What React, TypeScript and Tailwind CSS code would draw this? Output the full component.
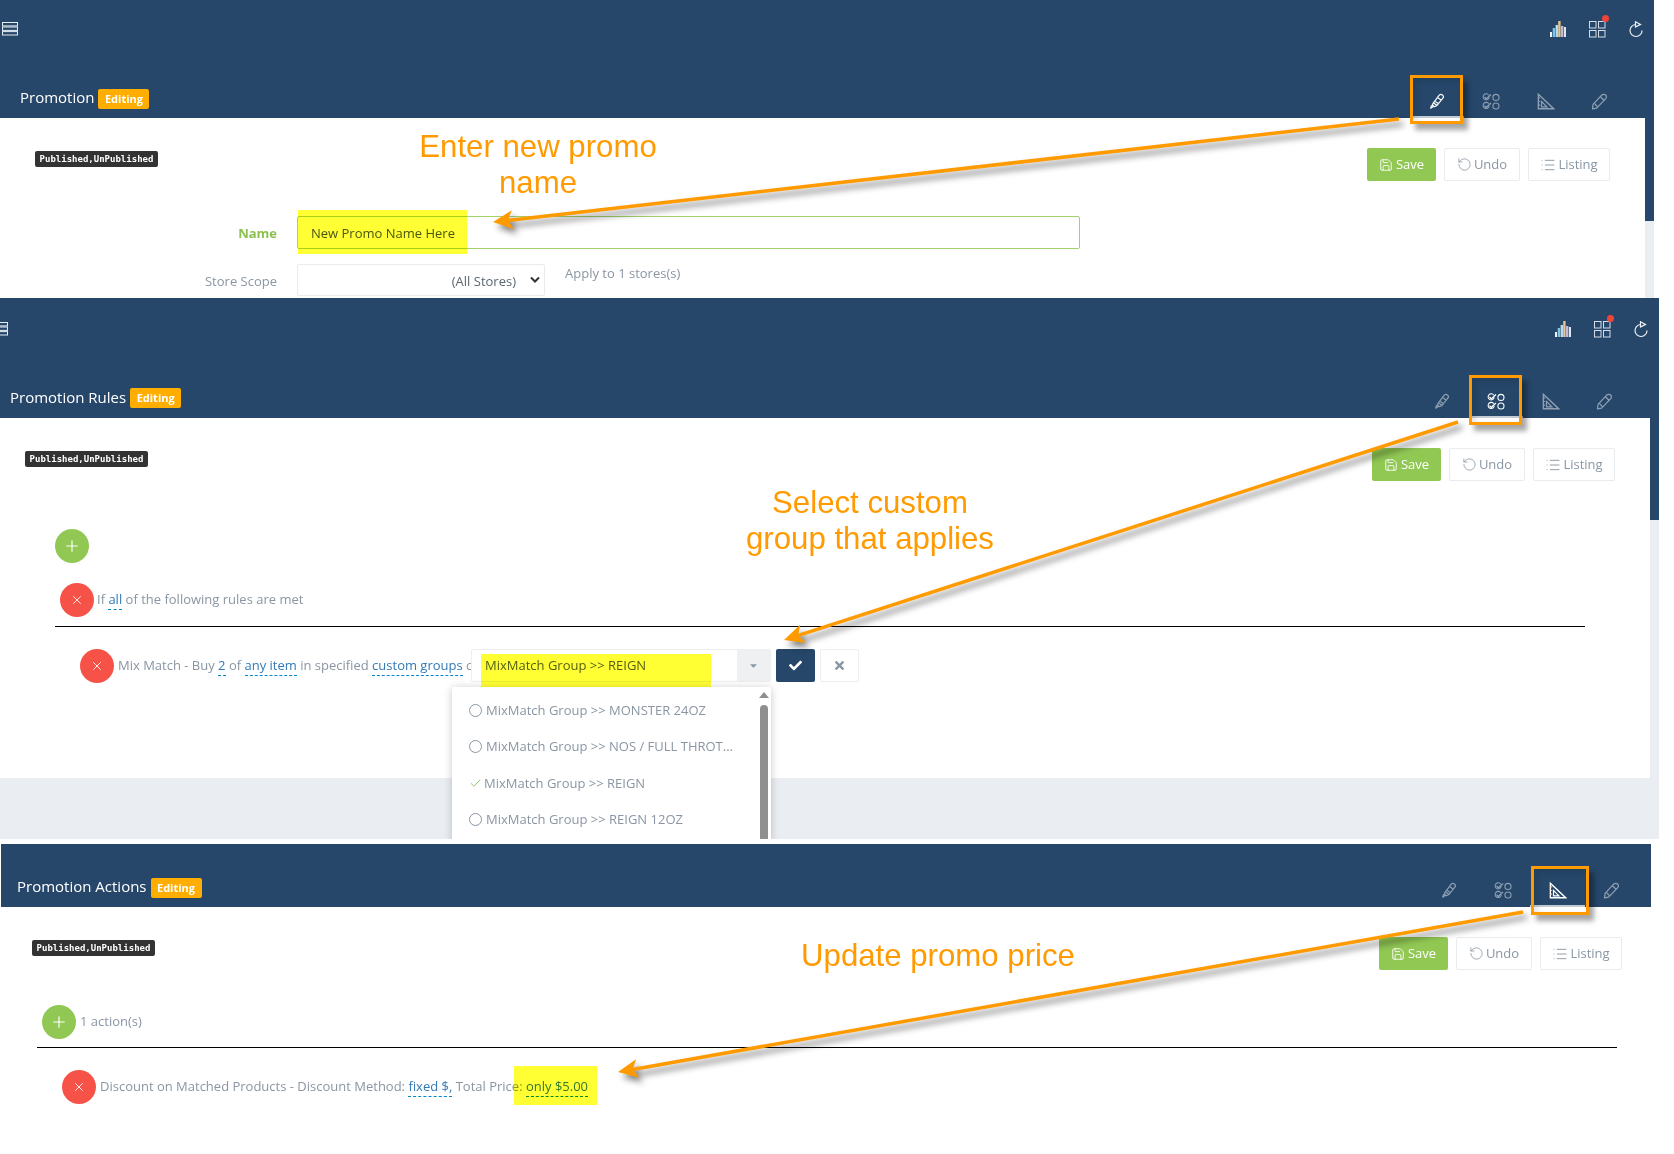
import React from "react";
import { FaCheck, FaTimes, FaCaretDown } from "react-icons/fa";
import { Save, RotateCcw, List, Plus, X, Check } from "lucide-react";

const TabEdit = ({ on }: { on: boolean }) => (
  <svg width="18" height="18" viewBox="0 0 20 20" fill="none" stroke={on ? "#ffffff" : "#8fa0b3"} strokeWidth="1.3" strokeLinejoin="round">
    <path d="M6 12 L12.5 3.5 Q14 2 16 3.2 Q18 5 16.7 6.6 L10 15 Z" />
    <path d="M6 12 L4.6 14.8 L5.8 16 L3 18 L3.8 15 M10 15 L7 16.4 L5.2 14.6" />
    <path d="M8 10.5 L12 13 M11 6.5 L14.5 9" />
  </svg>
);
const TabRules = ({ on }: { on: boolean }) => (
  <svg width="18" height="17" viewBox="0 0 20 18" fill="none" stroke={on ? "#ffffff" : "#8fa0b3"} strokeWidth="1.2">
    <path d="M7.5 2 A3.4 3.4 0 1 0 8 4.5" />
    <circle cx="15.5" cy="4.5" r="3.4" />
    <path d="M7.5 11.5 A3.4 3.4 0 1 0 8 14" />
    <circle cx="15.5" cy="14" r="3.4" />
    <path d="M2.8 4 L4.7 6.2 L10 1.2 M2.8 13.5 L4.7 15.7 L10 10.7" strokeWidth="1.4" />
  </svg>
);
const TabAction = ({ on }: { on: boolean }) => (
  <svg width="18" height="17" viewBox="0 0 20 18" fill="none" stroke={on ? "#ffffff" : "#8fa0b3"} strokeWidth="1.3">
    <path d="M1.5 1 L18.5 17 L1.5 17 Z" strokeWidth="1.5" />
    <path d="M5 9 L11 15 L5 15 Z" />
    <path d="M1.5 5 H3.5 M1.5 9 H3.5 M1.5 13 H3.5" stroke={on ? "#f4c28a" : "#8fa0b3"} />
  </svg>
);
const TabPencil = () => (
  <svg width="17" height="17" viewBox="0 0 18 18" fill="none" stroke="#8fa0b3" strokeWidth="1.3" strokeLinejoin="round">
    <path d="M2.2 12 L11.5 2 Q13.4 0.6 15.6 2.2 Q17 4.2 15.6 6 L6 16 L1.6 16.8 Z" />
    <path d="M10 4 L14 8 M3.5 11 L7 14.5" />
  </svg>
);

const TopIcons = ({ className }: { className: string }) => (
  <div className={`flex items-center ${className}`}>
    <svg width="16" height="16" viewBox="0 0 16 16">
      <rect x="0" y="11" width="2" height="5" fill="#eef4f8" />
      <rect x="2.7" y="7" width="2.4" height="9" fill="#7cc4e8" />
      <rect x="5.6" y="4" width="2.4" height="12" fill="#b6dcec" />
      <rect x="8.2" y="0" width="2.4" height="16" fill="#e8c48a" />
      <rect x="11" y="5" width="2.4" height="11" fill="#c8b8d8" />
      <rect x="14" y="6" width="2" height="10" fill="#dfe7ee" />
    </svg>
    <div className="relative">
      <svg width="17" height="17" viewBox="0 0 17 17" fill="none" stroke="#d5dee8" strokeWidth="1">
        <rect x="0.5" y="0.5" width="6.5" height="6.5" />
        <rect x="9.5" y="0.5" width="6.5" height="6.5" />
        <rect x="0.5" y="9.5" width="6.5" height="6.5" />
        <rect x="9.5" y="9.5" width="6.5" height="6.5" />
      </svg>
      <span className="absolute -top-[6px] -right-[3px] w-[7px] h-[7px] rounded-full bg-[#f04438]" />
    </div>
    <svg width="15" height="17" viewBox="0 0 15 17" fill="none" stroke="#eef3f7" strokeWidth="1.2">
      <path d="M6.5 3.5 A6 6 0 1 0 13 9.5" />
      <path d="M6.5 0.8 L6.5 6 L11.5 3.4 Z" />
    </svg>
  </div>
);

const MenuIcon = ({ className }: { className: string }) => (
  <svg width="16" height="14" viewBox="0 0 16 14" fill="none" stroke="#e6edf3" strokeWidth="1" className={className}>
    <rect x="0.5" y="0.5" width="15" height="3.4" />
    <rect x="0.5" y="5" width="15" height="3.4" />
    <rect x="0.5" y="9.6" width="15" height="3.4" />
  </svg>
);

const Header = ({ title, active, titleClass, tabsClass, labelClass }: { title: string; active: number; titleClass: string; tabsClass: string; labelClass: string }) => (
  <div className="flex items-end justify-between">
    <div className={`flex items-center gap-[4px] ${titleClass}`}>
      <span className={`text-[15px] text-white leading-[20px] ${labelClass}`}>{title}</span>
      <span className="bg-[#ffae00] text-white text-[11px] font-bold rounded-[2px] h-[20px] w-[51px] flex items-center justify-center">Editing</span>
    </div>
    <div className={`flex ${tabsClass}`}>
      {[0, 1, 2, 3].map((i) => (
        <div key={i} className={`w-[54.3px] h-[32px] flex items-center justify-center border-b-[2px] ${active === i ? "border-[#c3cbd4]" : "border-transparent"}`}>
          {i === 0 && <TabEdit on={active === 0} />}
          {i === 1 && <TabRules on={active === 1} />}
          {i === 2 && <TabAction on={active === 2} />}
          {i === 3 && <TabPencil />}
        </div>
      ))}
    </div>
  </div>
);

const Toolbar = ({ leftClass, rightClass }: { leftClass: string; rightClass: string }) => (
  <div className="flex items-start justify-between pt-[30px]">
    <span className={`mt-[3px] bg-[#333333] text-white text-[9px] font-bold rounded-[2px] h-[16px] w-[123px] flex items-center justify-center pt-[1px] ${leftClass}`} style={{ fontFamily: '"DejaVu Sans Mono", monospace' }}>
      Published,UnPublished
    </span>
    <div className={`flex gap-[8px] text-[13px] ${rightClass}`}>
      <button className="w-[69px] h-[33px] rounded-[2px] bg-[#91c854] text-white flex items-center justify-center gap-[3px]">
        <Save size={14} strokeWidth={1.5} /> Save
      </button>
      <button className="w-[76px] h-[33px] rounded-[2px] border border-[#e9ecef] text-[#8996a4] flex items-center justify-center gap-[2px]">
        <RotateCcw size={15} strokeWidth={1.3} /> Undo
      </button>
      <button className="w-[82px] h-[33px] rounded-[2px] border border-[#e9ecef] text-[#8996a4] flex items-center justify-center gap-[2px]">
        <List size={16} strokeWidth={1.4} /> Listing
      </button>
    </div>
  </div>
);

const Circle = ({ kind }: { kind: "add" | "del" }) => (
  <span className={`shrink-0 w-[34px] h-[34px] rounded-full flex items-center justify-center text-white ${kind === "add" ? "bg-[#91c854]" : "bg-[#f65247]"}`}>
    {kind === "add" ? <Plus size={18} strokeWidth={1.5} /> : <X size={14} strokeWidth={1.5} />}
  </span>
);

const Link = ({ children }: { children: React.ReactNode }) => (
  <span className="text-[#337ab7] border-b border-dashed border-[#0088cc] pb-[1px]">{children}</span>
);

const Option = ({ text, checked }: { text: string; checked?: boolean }) => (
  <div className="h-[36.5px] flex items-center pl-[17px] text-[13px] text-[#8a96a3]">
    {checked ? (
      <Check size={13} strokeWidth={1.5} className="text-[#7db642] mr-[2px]" />
    ) : (
      <span className="w-[13px] h-[13px] rounded-full border border-[#8a96a3] mr-[4px]" />
    )}
    <span>{text}</span>
  </div>
);

const Arrow = ({ x1, y1, x2, y2 }: { x1: number; y1: number; x2: number; y2: number }) => {
  const d = Math.hypot(x2 - x1, y2 - y1);
  const ux = (x2 - x1) / d;
  const uy = (y2 - y1) / d;
  const pt = (along: number, side: number) => `${x2 - ux * along - uy * side},${y2 - uy * along + ux * side}`;
  return (
    <g>
      <line x1={x1} y1={y1} x2={x2 - ux * 12} y2={y2 - uy * 12} stroke="#ff9a00" strokeWidth="3.5" />
      <polygon points={`${x2},${y2} ${pt(20, 9.5)} ${pt(15, 0)} ${pt(20, -9.5)}`} fill="#ff9a00" />
    </g>
  );
};

const Note = ({ className, children }: { className: string; children: React.ReactNode }) => (
  <div className={`absolute text-center text-[#ff9a00] text-[31.2px] leading-[36px] ${className}`} style={{ fontFamily: '"Liberation Sans", Arial, sans-serif' }}>
    {children}
  </div>
);

const Mark = ({ className }: { className: string }) => <div className={`absolute bg-[#ffff33] mix-blend-multiply ${className}`} />;
const Box = ({ className }: { className: string }) => (
  <div className={`absolute border-[3px] border-[#ff9a00] shadow-[5px_6px_5px_rgba(0,0,0,0.35),inset_3px_3px_6px_rgba(0,0,0,0.12)] ${className}`} />
);

export default function App() {
  return (
    <div className="relative w-[1674px] h-[1154px] overflow-hidden bg-white" style={{ fontFamily: '"Open Sans", sans-serif' }}>
      {/* Panel 1 */}
      <section className="flex w-[1654px] h-[298px] overflow-hidden">
        <div className="w-[1645px] flex flex-col">
          <div className="h-[118px] bg-[#26476a] shrink-0 flex flex-col justify-between">
            <div className="flex items-center justify-between h-[58px]">
              <MenuIcon className="ml-[2px]" />
              <TopIcons className="gap-[23px] mr-[1px]" />
            </div>
            <Header title="Promotion" active={0} titleClass="pl-[20px] pb-[9px]" tabsClass="pr-[18px]" labelClass="-mt-[4px]" />
          </div>
          <div className="flex-1 bg-white">
            <Toolbar leftClass="ml-[35px]" rightClass="pr-[35px]" />
            <div className="mt-[35px] flex items-center">
              <label className="w-[277px] text-right text-[13px] font-bold text-[#8cc152] pt-[2px]">Name</label>
              <div className="ml-[20px] w-[783px] h-[33px] rounded-[2px] border border-[#a5d16b] flex items-center pl-[13px] pt-[3px] text-[13px] text-[#4a5560]">New Promo Name Here</div>
            </div>
            <div className="mt-[15px] flex items-start">
              <label className="w-[277px] text-right text-[13px] text-[#8a96a3] pt-[8px]">Store Scope</label>
              <div className="ml-[20px] w-[248px] h-[32px] rounded-[2px] border border-[#e9ecef] flex items-center justify-end pr-[4px] text-[13px] text-[#5b6670]">
                <span className="mt-[3px]">(All Stores)</span>
                <svg width="10" height="8" viewBox="0 0 10 8" fill="none" stroke="#333" strokeWidth="2" className="ml-[14px]"><path d="M1 1.5 L5 5.5 L9 1.5" /></svg>
              </div>
              <span className="ml-[20px] text-[13px] text-[#8a96a3] leading-[18px]">Apply to 1 stores(s)</span>
            </div>
          </div>
        </div>
        <div className="w-[9px] flex flex-col bg-[#eaedf2]">
          <div className="h-[221px] bg-[#26476a]" />
        </div>
      </section>

      {/* Panel 2 */}
      <section className="relative flex w-[1659px] h-[541px] overflow-hidden bg-[#eaedf2]">
        <div className="w-[1650px] flex flex-col">
          <div className="h-[120px] bg-[#26476a] shrink-0 flex flex-col justify-between">
            <div className="flex items-center justify-between h-[62px]">
              <MenuIcon className="-ml-[8px]" />
              <TopIcons className="gap-[23px] mr-[1px]" />
            </div>
            <Header title="Promotion Rules" active={1} titleClass="pl-[10px] pb-[10px]" tabsClass="pr-[18px]" labelClass="-mt-[2px]" />
          </div>
          <div className="h-[360px] bg-white shrink-0">
            <Toolbar leftClass="ml-[25px]" rightClass="pr-[35px]" />
            <div className="mt-[48px] ml-[55px]"><Circle kind="add" /></div>
            <div className="mt-[20px] ml-[60px] flex items-center text-[13px] text-[#8a96a3]">
              <Circle kind="del" />
              <span className="ml-[3px]">If <Link>all</Link> of the following rules are met</span>
            </div>
            <div className="mt-[9px] ml-[55px] w-[1530px] h-[1px] bg-black" />
            <div className="mt-[22px] ml-[80px] flex items-center text-[13px] text-[#8a96a3]">
              <Circle kind="del" />
              <span className="ml-[4px] w-[353px] whitespace-nowrap">Mix Match - Buy <Link>2</Link> of <Link>any item</Link> in specified <Link>custom groups</Link> c</span>
              <div className="w-[300px] h-[33px] -mt-[2px] rounded-[2px] border border-[#eceef1] flex items-center text-[#55606b]">
                <span className="flex-1 pl-[13px] pt-[1px]">MixMatch Group &gt;&gt; REIGN</span>
                <span className="w-[33px] h-full bg-[#eef0f2] flex items-center justify-center text-[#8a96a3]"><FaCaretDown size={11} /></span>
              </div>
              <button className="ml-[5px] -mt-[2px] w-[39px] h-[33px] rounded-[2px] bg-[#26476a] text-white flex items-center justify-center"><FaCheck size={13} /></button>
              <button className="ml-[5px] -mt-[2px] w-[39px] h-[33px] rounded-[2px] border border-[#eceef1] text-[#8996a4] flex items-center justify-center"><FaTimes size={13} /></button>
            </div>
          </div>
        </div>
        <div className="w-[9px] flex flex-col">
          <div className="h-[222px] bg-[#26476a]" />
        </div>
        <div className="absolute left-[452px] top-[389px] w-[319px] h-[170px] bg-white rounded-[2px] shadow-[0_1px_8px_rgba(0,0,0,0.22)] pt-[5px]">
          <Option text="MixMatch Group >> MONSTER 24OZ" />
          <Option text="MixMatch Group >> NOS / FULL THROT..." />
          <Option text="MixMatch Group >> REIGN" checked />
          <Option text="MixMatch Group >> REIGN 12OZ" />
          <span className="absolute right-[3px] top-[18px] w-[8px] h-[160px] bg-[#8f8f8f] rounded-[4px]" />
          <span className="absolute right-[2px] top-[5px] w-0 h-0 border-x-[5px] border-x-transparent border-b-[6px] border-b-[#8f8f8f]" />
        </div>
      </section>

      {/* Panel 3 */}
      <section className="mt-[5px] ml-[1px] w-[1650px]">
        <div className="h-[63px] bg-[#26476a] flex flex-col justify-end">
          <Header title="Promotion Actions" active={2} titleClass="pl-[16px] pb-[9px]" tabsClass="pr-[12px]" labelClass="-mt-[4px]" />
        </div>
        <Toolbar leftClass="ml-[31px]" rightClass="pr-[29px]" />
        <div className="mt-[35px] ml-[41px] flex items-center text-[13px] text-[#8a96a3]">
          <Circle kind="add" />
          <span className="ml-[4px]">1 action(s)</span>
        </div>
        <div className="mt-[8px] ml-[36px] w-[1580px] h-[1px] bg-black" />
        <div className="mt-[22px] ml-[61px] flex items-center text-[13px] text-[#8a96a3]">
          <Circle kind="del" />
          <span className="ml-[4px]">Discount on Matched Products - Discount Method: <Link>fixed $,</Link> Total Price: <Link>only $5.00</Link></span>
        </div>
      </section>

      {/* Annotations */}
      <Mark className="left-[298px] top-[210px] w-[169px] h-[44px]" />
      <Mark className="left-[481px] top-[654px] w-[230px] h-[33px]" />
      <Mark className="left-[514px] top-[1066px] w-[83px] h-[39px]" />
      <Box className="left-[1410px] top-[75px] w-[53px] h-[49px]" />
      <Box className="left-[1469px] top-[375px] w-[53px] h-[50px]" />
      <Box className="left-[1531px] top-[866px] w-[58px] h-[49px]" />
      <Note className="left-[388px] top-[129px] w-[300px]">Enter new promo<br />name</Note>
      <Note className="left-[700px] top-[485px] w-[340px]">Select custom<br />group that applies</Note>
      <Note className="left-[738px] top-[938px] w-[400px]">Update promo price</Note>
      <svg className="absolute inset-0 pointer-events-none drop-shadow-[4px_5px_3px_rgba(0,0,0,0.5)]" width="1674" height="1154" viewBox="0 0 1674 1154">
        <Arrow x1={1399} y1={119} x2={493} y2={222} />
        <Arrow x1={1458} y1={422} x2={784} y2={640} />
        <Arrow x1={1523} y1={912} x2={618} y2={1072} />
      </svg>
    </div>
  );
}
